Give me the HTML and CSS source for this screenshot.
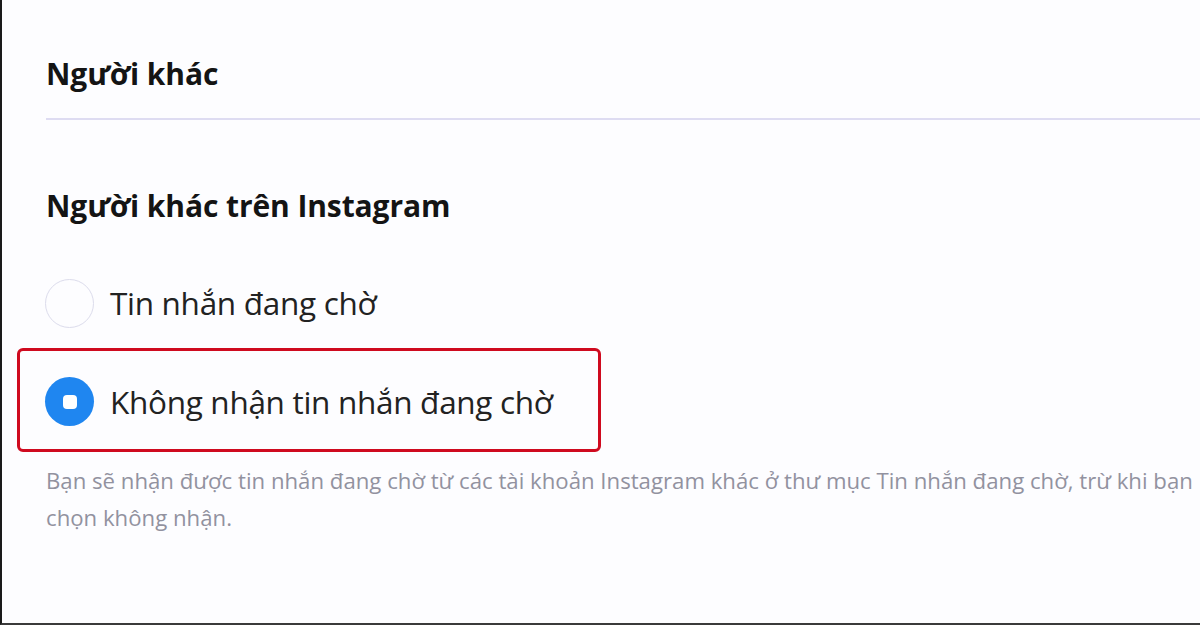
FILE: index.html
```html
<!DOCTYPE html>
<html lang="vi">
<head>
<meta charset="utf-8">
<link rel="stylesheet" href="styles.css">
</head>
<body>
<div class="frame">
  <div class="content">
    <h2 class="section-title">Người khác</h2>
    <div class="divider"></div>
    <h3 class="group-title">Người khác trên Instagram</h3>
    <div class="options">
      <div class="option">
        <span class="radio"></span>
        <span class="label">Tin nhắn đang chờ</span>
      </div>
      <div class="option highlighted">
        <span class="radio checked"></span>
        <span class="label">Không nhận tin nhắn đang chờ</span>
      </div>
    </div>
    <p class="desc">Bạn sẽ nhận được tin nhắn đang chờ từ các tài khoản Instagram khác ở thư mục Tin nhắn đang chờ, trừ khi bạn<br>chọn không nhận.</p>
  </div>
</div>
</body>
</html>
```

FILE: styles.css
```css
html, body {
  margin: 0;
  padding: 0;
  background: #fdfdff;
}
body {
  width: 1200px;
  height: 625px;
  overflow: hidden;
  font-family: "Open Sans", "Noto Sans", sans-serif;
  color: #1c1c1c;
}
.frame {
  box-sizing: border-box;
  width: 1200px;
  height: 625px;
  border-left: 2px solid #1a1a1a;
  border-bottom: 2px solid #3a3a3a;
  overflow: hidden;
}
.content {
  padding-left: 44px;
  padding-top: 52px;
  width: 1500px;
}
.section-title {
  margin: 0;
  font-size: 30px;
  font-weight: 700;
  line-height: 44px;
  letter-spacing: -0.1px;
  color: #141414;
}
.divider {
  margin-top: 22px;
  height: 2px;
  background: #dedcf2;
}
.group-title {
  margin: 64px 0 0 0;
  font-size: 30px;
  font-weight: 700;
  line-height: 44px;
  letter-spacing: -0.1px;
  color: #141414;
}
.options {
  margin-top: 48px;
  margin-left: -29px;
  width: 584px;
  display: flex;
  flex-direction: column;
  gap: 18px;
}
.option {
  display: flex;
  align-items: center;
  gap: 16px;
  height: 104px;
  padding-left: 25px;
  padding-top: 3px;
  box-sizing: border-box;
  border: 3px solid transparent;
  border-radius: 6px;
}
.option:first-child {
  height: 54px;
  padding-top: 0;
}
.highlighted {
  border-color: #cf0a1f;
}
.radio {
  width: 49px;
  height: 49px;
  box-sizing: border-box;
  border: 1.5px solid #dcdcec;
  border-radius: 50%;
  background: #fdfdff;
  flex: none;
  display: flex;
  align-items: center;
  justify-content: center;
}
.radio.checked {
  border: none;
  background: #1f86f0;
}
.radio.checked::after {
  content: "";
  width: 14px;
  height: 14px;
  border-radius: 4px;
  background: #ffffff;
}
.label {
  font-size: 31.5px;
  line-height: 42px;
  color: #222;
  letter-spacing: -0.3px;
}
.desc {
  margin: 10px 0 0 0;
  font-size: 22.2px;
  line-height: 37px;
  color: #92929f;
  white-space: nowrap;
}
```
